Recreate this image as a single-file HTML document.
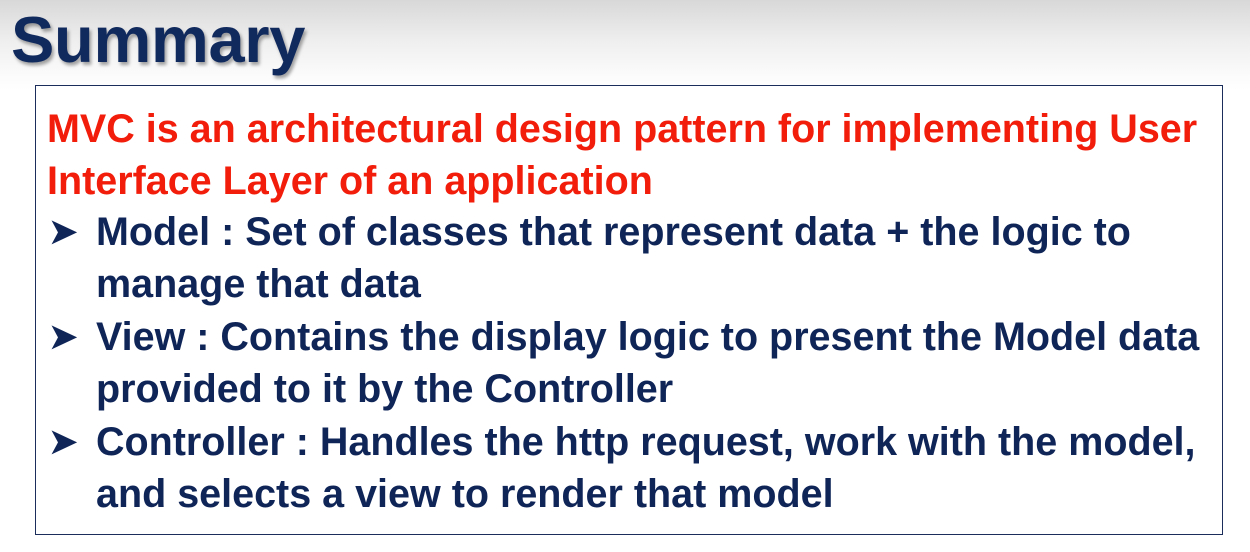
<!DOCTYPE html>
<html><head><style>
html,body{margin:0;padding:0}
body{width:1250px;height:552px;overflow:hidden;position:relative;background:linear-gradient(#d8d8d8 0px,#eeeeee 40px,#fbfbfb 75px,#fff 90px);font-family:"Liberation Sans",Arial,sans-serif;font-weight:bold}
.t{position:absolute;left:11px;top:2px;font-size:65px;color:#112a5e;text-shadow:2px 3px 3px rgba(0,0,0,.35);letter-spacing:-0.3px}
.box{position:absolute;left:35px;top:85px;width:1186px;height:448px;border:1.5px solid #1b2d5a;background:#fff}
.l{position:absolute;white-space:nowrap;font-size:39.5px;line-height:40px;letter-spacing:0}
.r{color:#f21d0a;left:47px}
.b{color:#0f2558;left:96px}
.a{position:absolute;left:49px;color:#0f2558;font-size:34px;line-height:40px}
</style></head><body>
<div class="t">Summary</div>
<div class="box"></div>
<div class="l r" style="top:109px">MVC is an architectural design pattern for implementing User</div>
<div class="l r" style="top:161px">Interface Layer of an application</div>
<div class="a" style="top:212px">&#10148;</div>
<div class="l b" style="top:212px">Model : Set of classes that represent data + the logic to</div>
<div class="l b" style="top:264px">manage that data</div>
<div class="a" style="top:317px">&#10148;</div>
<div class="l b" style="top:317px">View : Contains the display logic to present the Model data</div>
<div class="l b" style="top:369px">provided to it by the Controller</div>
<div class="a" style="top:422px">&#10148;</div>
<div class="l b" style="top:422px">Controller : Handles the http request, work with the model,</div>
<div class="l b" style="top:474px">and selects a view to render that model</div>
</body></html>
